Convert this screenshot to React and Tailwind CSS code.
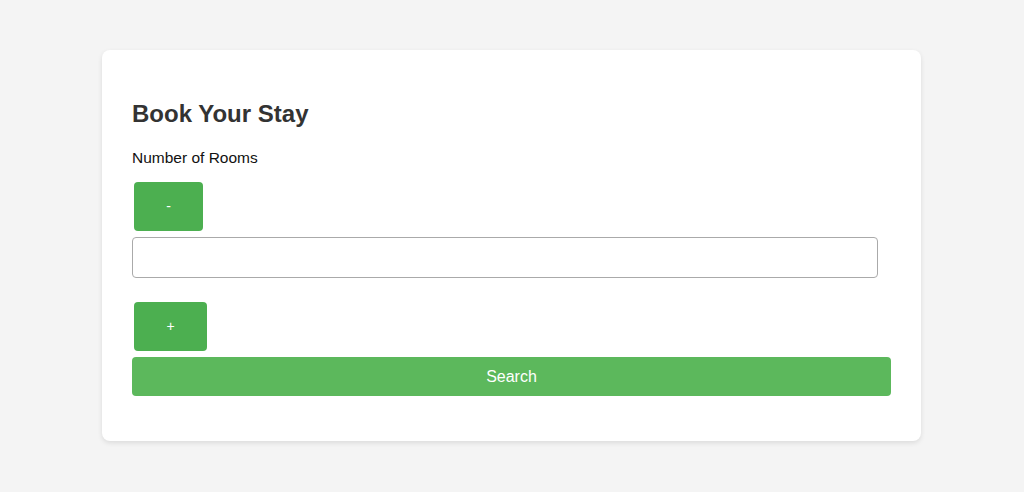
import React, { useState } from 'react';

export default function App() {
  const [rooms, setRooms] = useState('');

  return (
    <div className="min-h-[492px] bg-[#f4f4f4] pt-[50px] font-['Liberation_Sans',Arial,sans-serif]">
      <div className="ml-[102px] w-[819px] h-[391px] rounded-lg bg-white px-[30px] pt-[30px] shadow-[0_2px_5px_rgba(0,0,0,0.1)]">
        <h2 className="mt-[20px] mb-[21px] text-[24px] leading-[28px] font-bold text-[#333]">Book Your Stay</h2>

        <label className="block text-[15.5px] leading-[18px] text-[#111]">Number of Rooms</label>

        <div className="flex flex-col items-start">
          <button
            onClick={() => setRooms(String(Math.max(0, Number(rooms || 0) - 1)))}
            className="mt-[15px] ml-[2px] w-[69px] h-[49px] rounded-[4px] bg-[#4caf50] text-white text-[14px]"
          >
            -
          </button>
          <input
            value={rooms}
            onChange={(e) => setRooms(e.target.value)}
            className="mt-[6px] w-[746px] h-[41px] rounded-[4px] border border-[#aaa] px-2 text-[16px] outline-none"
          />
          <button
            onClick={() => setRooms(String(Number(rooms || 0) + 1))}
            className="mt-[24px] ml-[2px] w-[73px] h-[49px] rounded-[4px] bg-[#4caf50] text-white text-[14px]"
          >
            +
          </button>
          <button className="mt-[6px] w-[759px] h-[39px] rounded-[4px] bg-[#5cb85c] text-white text-[16px]">
            Search
          </button>
        </div>
      </div>
    </div>
  );
}
